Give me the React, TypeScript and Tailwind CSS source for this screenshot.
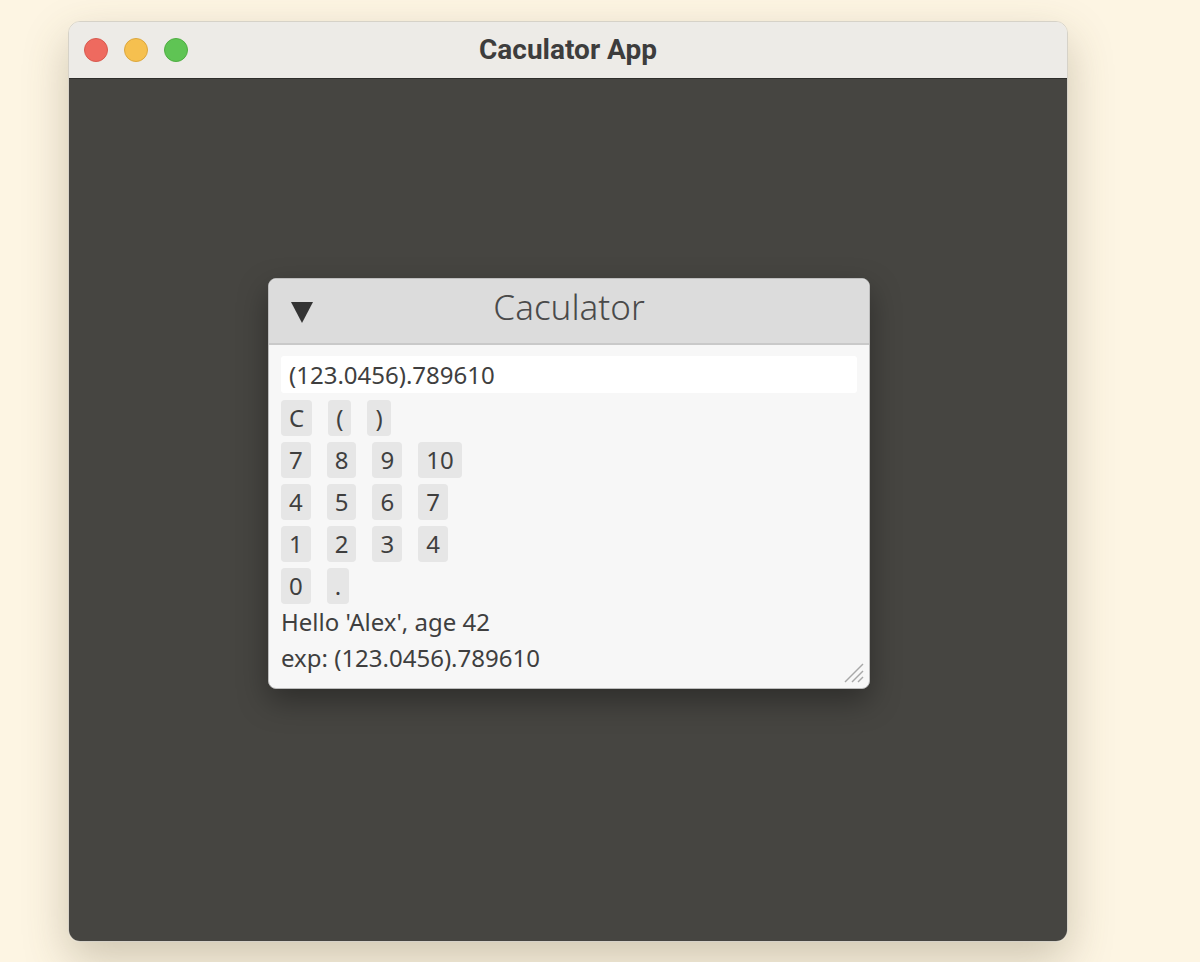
import React from "react";

const rows: string[][] = [
  ["C", "(", ")"],
  ["7", "8", "9", "10"],
  ["4", "5", "6", "7"],
  ["1", "2", "3", "4"],
  ["0", "."],
];

function Key({ label }: { label: string }) {
  return (
    <button
      type="button"
      className="h-[36px] rounded-[4px] bg-[#e6e6e6] px-[8px] text-[24px] leading-none text-[#3f3f3f]"
    >
      {label}
    </button>
  );
}

function CalcPanel() {
  return (
    <div className="w-[602px] overflow-hidden rounded-[8px] border border-[#bdbdbd] bg-[#f7f7f7] shadow-[0_12px_30px_rgba(0,0,0,0.35)] [font-family:'Noto_Sans',sans-serif]">
      <div className="relative flex h-[66px] items-center justify-center border-b-2 border-[#c9c9c9] bg-[#dcdcdc] pb-[8px]">
        <svg className="absolute left-[22px] top-[22px]" width="22" height="22" viewBox="0 0 22 22">
          <polygon points="0,1 22,1 11,22" fill="#333333" />
        </svg>
        <span className="text-[35px] font-light text-[#4a4a4a]">Caculator</span>
      </div>
      <div className="relative flex flex-col px-[12px] pt-[11px] pb-[12px]">
        <div className="flex h-[37px] items-center rounded-[3px] bg-white px-[8px] text-[24px] text-[#3f3f3f]">
          (123.0456).789610
        </div>
        <div className="mt-[7px] flex flex-col gap-[6px]">
          {rows.map((r, i) => (
            <div key={i} className="flex gap-[16px]">
              {r.map((k, j) => (
                <Key key={j} label={k} />
              ))}
            </div>
          ))}
        </div>
        <div className="text-[24px] leading-[36px] text-[#3f3f3f]">Hello 'Alex', age 42</div>
        <div className="text-[24px] leading-[36px] text-[#3f3f3f]">exp: (123.0456).789610</div>
        <svg className="absolute right-[4px] bottom-[4px]" width="22" height="22" viewBox="0 0 22 22">
          <line x1="20" y1="2" x2="2" y2="20" stroke="#a8a8a8" strokeWidth="1.5" />
          <line x1="20" y1="9" x2="9" y2="20" stroke="#a8a8a8" strokeWidth="1.5" />
          <line x1="20" y1="15" x2="15" y2="20" stroke="#a8a8a8" strokeWidth="1.5" />
        </svg>
      </div>
    </div>
  );
}

export default function App() {
  return (
    <div className="h-[962px] w-[1200px] bg-[#fdf5e3] pt-[21px] pl-[68px]">
      <div className="flex h-[921px] w-[1000px] flex-col overflow-hidden rounded-[12px] border border-[#d6d2c8] shadow-[0_18px_45px_rgba(90,80,50,0.28)]">
        <div className="relative flex h-[57px] items-center justify-center border-b border-[#2f2e2b] bg-[#edebe7]">
          <div className="absolute left-[15px] top-[16px] flex gap-[16px]">
            <span className="h-[24px] w-[24px] rounded-full border border-[#d85a4f] bg-[#ee6a5f]" />
            <span className="h-[24px] w-[24px] rounded-full border border-[#dca73e] bg-[#f6c04f]" />
            <span className="h-[24px] w-[24px] rounded-full border border-[#4fae42] bg-[#5fc454]" />
          </div>
          <span className="text-[28px] font-bold text-[#3d3d3d] [font-family:Roboto,sans-serif]">Caculator App</span>
        </div>
        <div className="flex flex-1 items-start bg-[#464541] pt-[199px] pl-[199px]">
          <CalcPanel />
        </div>
      </div>
    </div>
  );
}
